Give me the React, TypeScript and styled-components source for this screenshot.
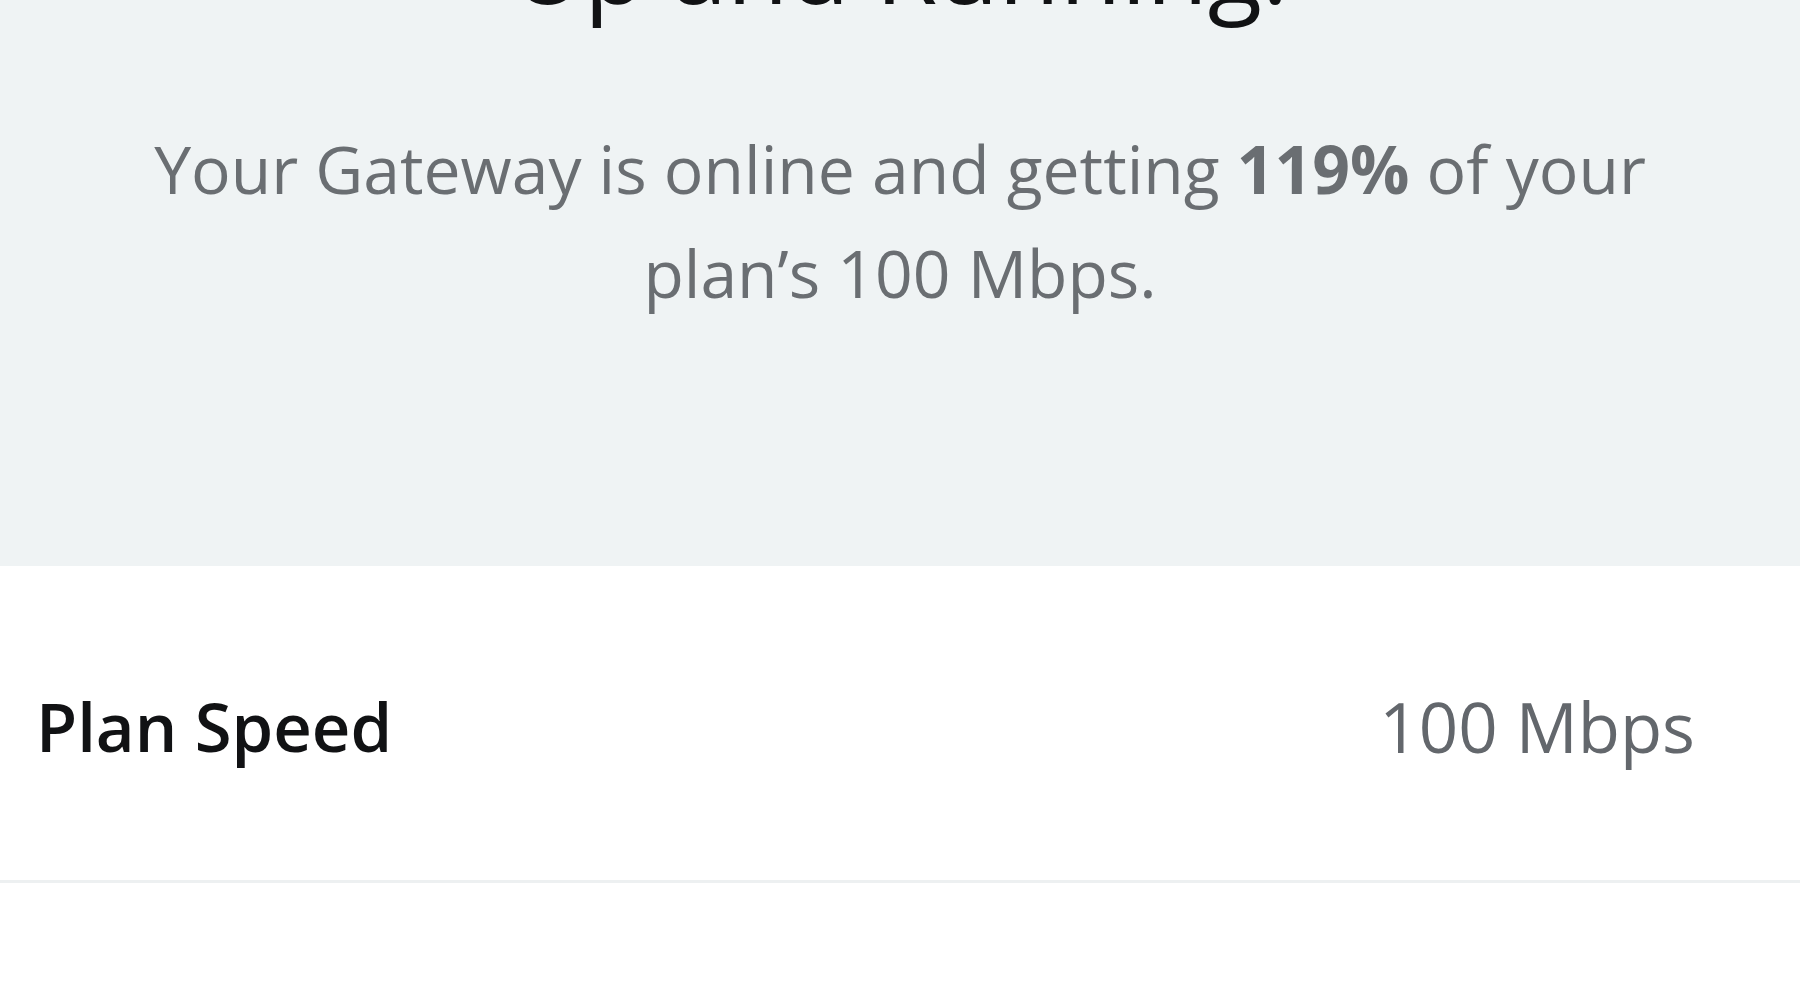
import styled, { createGlobalStyle } from 'styled-components';

const GlobalStyle = createGlobalStyle`
    html, body {
        margin: 0;
        padding: 0;
        background: #ffffff;
        font-family: "Open Sans", "Noto Sans", sans-serif;
    }
`;

const Hero = styled.section`
    background-color: #eff3f4;
    height: 566px;
    text-align: center;
    overflow: hidden;
`;

const Title = styled.h1`
    margin: -85px 0 0;
    font-size: 100px;
    line-height: 100px;
    font-weight: 500;
    color: #111214;
`;

const Message = styled.p`
    margin: 101px 0 0;
    font-size: 66px;
    line-height: 104px;
    font-weight: 400;
    color: #6a6e72;

    strong {
        font-weight: 700;
    }
`;

const InfoRow = styled.div`
    display: flex;
    justify-content: space-between;
    align-items: center;
    height: 317px;
    padding: 6px 105px 0 36px;
    box-sizing: border-box;
    border-bottom: 3px solid #edf0f1;
`;

const Label = styled.span`
    font-size: 67px;
    font-weight: 600;
    color: #111214;
`;

const Value = styled.span<{ $muted?: boolean }>`
    font-size: 69px;
    font-weight: 500;
    color: ${(p) => (p.$muted ? '#63676c' : '#111214')};
`;

export default function App() {
    return (
        <>
            <GlobalStyle />
            <Hero>
                <Title>Up and Running!</Title>
                <Message>
                    Your Gateway is online and getting <strong>119%</strong> of your
                    <br />
                    plan’s 100 Mbps.
                </Message>
            </Hero>
            <InfoRow>
                <Label>Plan Speed</Label>
                <Value $muted>100 Mbps</Value>
            </InfoRow>
        </>
    );
}
